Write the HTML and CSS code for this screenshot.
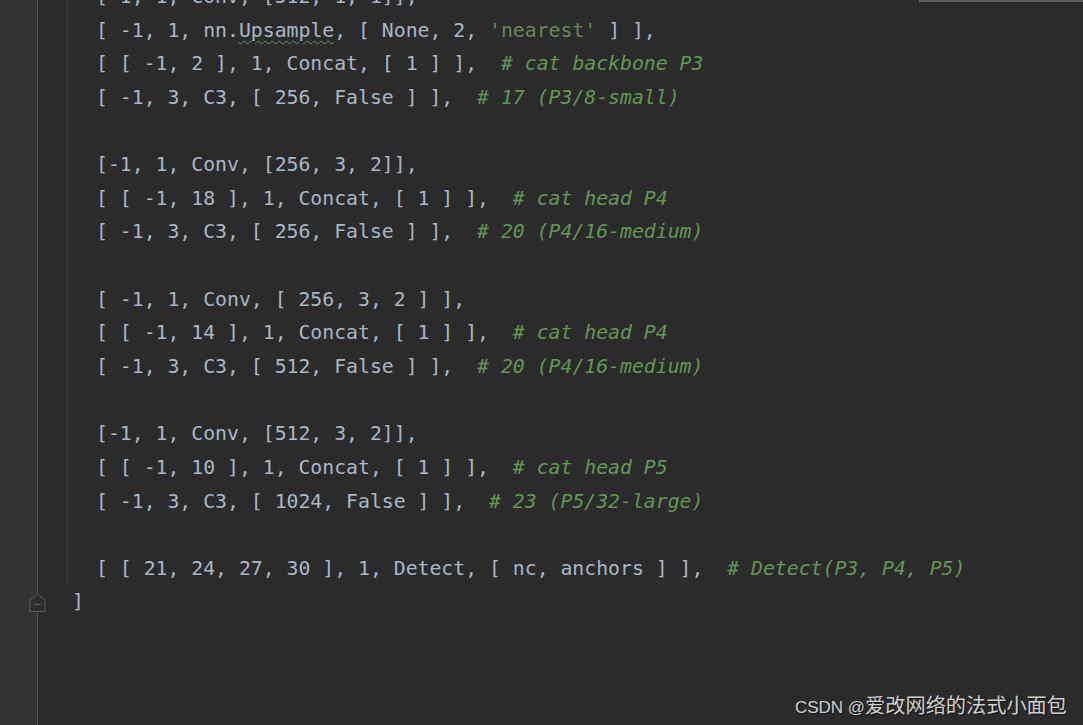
FILE: index.html
```html
<!DOCTYPE html>
<html lang="zh-CN">
<head>
<meta charset="utf-8">
<title>yolov5s.yaml</title>
<link rel="stylesheet" href="styles.css">
</head>
<body>
<div class="ide">
  <div class="gutter">
    <div class="fold">
      <svg width="17" height="19" viewBox="0 0 17 19"><path d="M1 18.5 V7.2 L8.5 0.8 L16 7.2 V18.5 Z" fill="#2d2e2f" stroke="#5a5d60" stroke-width="1"/><path d="M5 11.5 H12" stroke="#5a5d60" stroke-width="1"/></svg>
    </div>
  </div>
  <div class="editor">
    <div class="scroll-thumb"></div>
    <div class="code">
      <div class="block">
        <div class="line">[-1, 1, Conv, [512, 1, 1]],</div>
        <div class="line">[ -1, 1, nn.<span class="typo">Upsample</span>, [ None, 2, <span class="str">'nearest'</span> ] ],</div>
        <div class="line">[ [ -1, 2 ], 1, Concat, [ 1 ] ],  <span class="cmt"># cat backbone P3</span></div>
        <div class="line">[ -1, 3, C3, [ 256, False ] ],  <span class="cmt"># 17 (P3/8-small)</span></div>
        <div class="line"></div>
        <div class="line">[-1, 1, Conv, [256, 3, 2]],</div>
        <div class="line">[ [ -1, 18 ], 1, Concat, [ 1 ] ],  <span class="cmt"># cat head P4</span></div>
        <div class="line">[ -1, 3, C3, [ 256, False ] ],  <span class="cmt"># 20 (P4/16-medium)</span></div>
        <div class="line"></div>
        <div class="line">[ -1, 1, Conv, [ 256, 3, 2 ] ],</div>
        <div class="line">[ [ -1, 14 ], 1, Concat, [ 1 ] ],  <span class="cmt"># cat head P4</span></div>
        <div class="line">[ -1, 3, C3, [ 512, False ] ],  <span class="cmt"># 20 (P4/16-medium)</span></div>
        <div class="line"></div>
        <div class="line">[-1, 1, Conv, [512, 3, 2]],</div>
        <div class="line">[ [ -1, 10 ], 1, Concat, [ 1 ] ],  <span class="cmt"># cat head P5</span></div>
        <div class="line">[ -1, 3, C3, [ 1024, False ] ],  <span class="cmt"># 23 (P5/32-large)</span></div>
        <div class="line"></div>
        <div class="line">[ [ 21, 24, 27, 30 ], 1, Detect, [ nc, anchors ] ],  <span class="cmt"># Detect(P3, P4, P5)</span></div>
      </div>
      <div class="line close">]</div>
    </div>
    <div class="watermark"><span class="wm-latin">CSDN @</span><span class="wm-cjk">爱改网络的法式小面包</span></div>
  </div>
</div>
</body>
</html>
```
FILE: styles.css
```css
:root {
  --lh: 33.65px;
  --first-top: -20.1px;
}
html, body {
  margin: 0;
  padding: 0;
  height: 100%;
  overflow: hidden;
}
body {
  background: #2b2b2b;
}
.ide {
  display: flex;
  height: 725px;
}
.gutter {
  width: 37px;
  flex: none;
  background: #313335;
  border-right: 1px solid #545658;
  display: flex;
  flex-direction: column;
}
.fold {
  margin-top: calc(-20.4px + 18 * var(--lh));
  height: var(--lh);
  display: flex;
  align-items: center;
  justify-content: flex-end;
  margin-right: -9px;
}
.fold svg {
  display: block;
}
.editor {
  flex: 1;
  position: relative;
  padding-left: 29px;
}
.scroll-thumb {
  position: absolute;
  top: 0;
  right: 0;
  width: 164px;
  height: 2px;
  background: #5d6063;
}
.code {
  margin-top: var(--first-top);
  font-family: "DejaVu Sans Mono", "Liberation Mono", monospace;
  font-size: 19.8px;
  color: #a9b7c6;
}
.block {
  border-left: 1px solid #3a3a3a;
  padding-left: 28px;
}
.line {
  height: var(--lh);
  line-height: var(--lh);
  white-space: pre;
}
.close {
  padding-left: 5px;
}
.str {
  color: #6a8759;
}
.cmt {
  color: #629755;
  font-style: italic;
}
.typo {
  text-decoration: underline wavy #659c6b;
  text-decoration-thickness: 1px;
  text-underline-offset: 3px;
}
.watermark {
  position: absolute;
  right: 16px;
  bottom: 6px;
  color: #cfcfcf;
  text-shadow: 1px 1px 1px #151515;
  white-space: nowrap;
}
.wm-latin {
  font-family: "Liberation Sans", "Noto Sans CJK SC", sans-serif;
  font-size: 17px;
}
.wm-cjk {
  font-family: "Noto Sans CJK SC", sans-serif;
  font-size: 20.2px;
}
```
